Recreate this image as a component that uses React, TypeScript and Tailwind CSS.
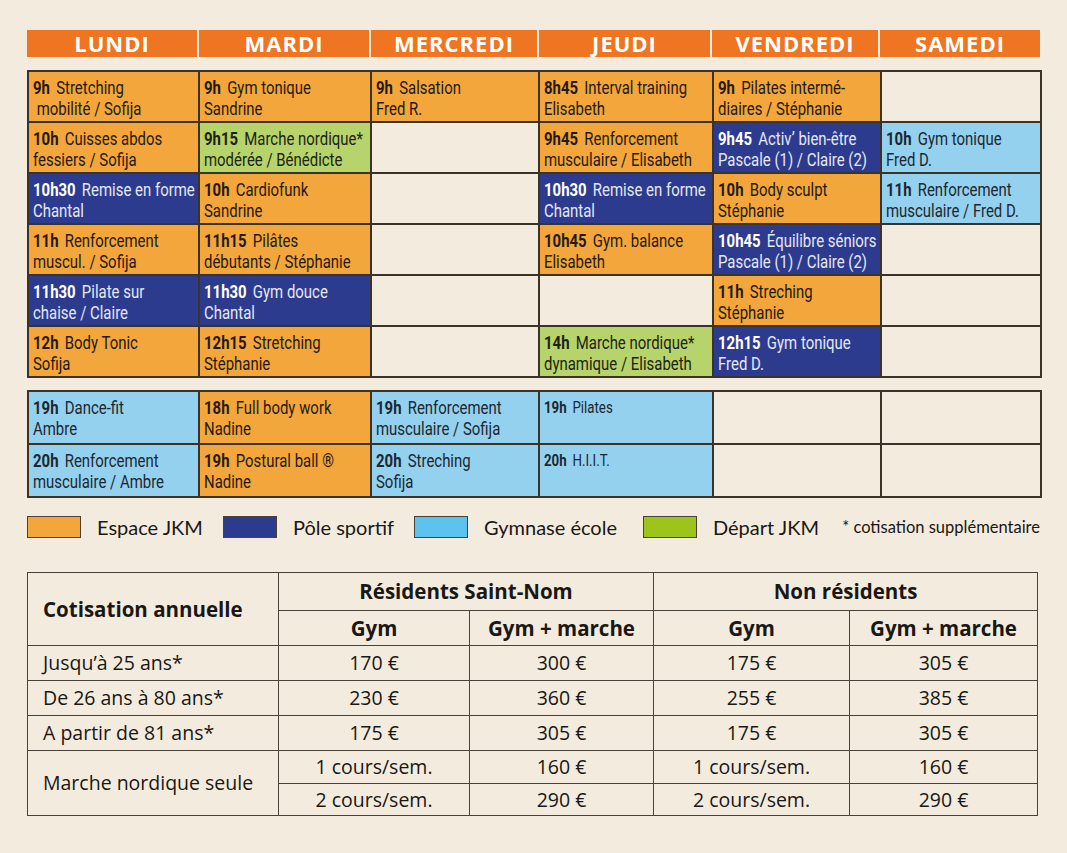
import React from 'react';

type Slot = { t: string; a: string; b?: string; c?: 'o' | 'n' | 'b' | 'g'; small?: boolean } | null;

const cellFont = { fontFamily: 'Roboto, "Liberation Sans", sans-serif' };

const days = [
  { name: 'LUNDI', w: 'w-[170px]' },
  { name: 'MARDI', w: 'w-[170px]' },
  { name: 'MERCREDI', w: 'w-[166px]' },
  { name: 'JEUDI', w: 'w-[171px]' },
  { name: 'VENDREDI', w: 'w-[166px]' },
  { name: 'SAMEDI', w: 'w-[160px]' },
];

const colWidths = ['w-[171px]', 'w-[172px]', 'w-[168px]', 'w-[174px]', 'w-[168px]', 'w-[160px]'];

const morning: Slot[][] = [
  [
    { t: '9h', a: 'Stretching', b: '\u00a0mobilité / Sofija', c: 'o' },
    { t: '9h', a: 'Gym tonique', b: 'Sandrine', c: 'o' },
    { t: '9h', a: 'Salsation', b: 'Fred R.', c: 'o' },
    { t: '8h45', a: 'Interval training', b: 'Elisabeth', c: 'o' },
    { t: '9h', a: 'Pilates intermé-', b: 'diaires / Stéphanie', c: 'o' },
    null,
  ],
  [
    { t: '10h', a: 'Cuisses abdos', b: 'fessiers / Sofija', c: 'o' },
    { t: '9h15', a: 'Marche nordique*', b: 'modérée / Bénédicte', c: 'g' },
    null,
    { t: '9h45', a: 'Renforcement', b: 'musculaire / Elisabeth', c: 'o' },
    { t: '9h45', a: 'Activ’ bien-être', b: 'Pascale (1) / Claire (2)', c: 'n' },
    { t: '10h', a: 'Gym tonique', b: 'Fred D.', c: 'b' },
  ],
  [
    { t: '10h30', a: 'Remise en forme', b: 'Chantal', c: 'n' },
    { t: '10h', a: 'Cardiofunk', b: 'Sandrine', c: 'o' },
    null,
    { t: '10h30', a: 'Remise en forme', b: 'Chantal', c: 'n' },
    { t: '10h', a: 'Body sculpt', b: 'Stéphanie', c: 'o' },
    { t: '11h', a: 'Renforcement', b: 'musculaire / Fred D.', c: 'b' },
  ],
  [
    { t: '11h', a: 'Renforcement', b: 'muscul. / Sofija', c: 'o' },
    { t: '11h15', a: 'Pilâtes', b: 'débutants / Stéphanie', c: 'o' },
    null,
    { t: '10h45', a: 'Gym. balance', b: 'Elisabeth', c: 'o' },
    { t: '10h45', a: 'Équilibre séniors', b: 'Pascale (1) / Claire (2)', c: 'n' },
    null,
  ],
  [
    { t: '11h30', a: 'Pilate sur', b: 'chaise / Claire', c: 'n' },
    { t: '11h30', a: 'Gym douce', b: 'Chantal', c: 'n' },
    null,
    null,
    { t: '11h', a: 'Streching', b: 'Stéphanie', c: 'o' },
    null,
  ],
  [
    { t: '12h', a: 'Body Tonic', b: 'Sofija', c: 'o' },
    { t: '12h15', a: 'Stretching', b: 'Stéphanie', c: 'o' },
    null,
    { t: '14h', a: 'Marche nordique*', b: 'dynamique / Elisabeth', c: 'g' },
    { t: '12h15', a: 'Gym tonique', b: 'Fred D.', c: 'n' },
    null,
  ],
];

const evening: Slot[][] = [
  [
    { t: '19h', a: 'Dance-fit', b: 'Ambre', c: 'b' },
    { t: '18h', a: 'Full body work', b: 'Nadine', c: 'o' },
    { t: '19h', a: 'Renforcement', b: 'musculaire / Sofija', c: 'b' },
    { t: '19h', a: 'Pilates', c: 'b', small: true },
    null,
    null,
  ],
  [
    { t: '20h', a: 'Renforcement', b: 'musculaire / Ambre', c: 'b' },
    { t: '19h', a: 'Postural ball ®', b: 'Nadine', c: 'o' },
    { t: '20h', a: 'Streching', b: 'Sofija', c: 'b' },
    { t: '20h', a: 'H.I.I.T.', c: 'b', small: true },
    null,
    null,
  ],
];

const bg = {
  o: 'bg-[#f2a63c] text-[#261a0e]',
  n: 'bg-[#2d3b8e] text-[#e4e8f5]',
  b: 'bg-[#93d1ee] text-[#1d2730]',
  g: 'bg-[#b7d46c] text-[#1d230f]',
};

function Cell({ s, w }: { s: Slot; w: string }) {
  if (!s) return <td className={`${w} border-2 border-[#3a3328] bg-[#f3ecde]`} />;
  return (
    <td className={`${w} border-2 border-[#3a3328] ${bg[s.c ?? 'o']} align-top pl-[4px] pt-[5px] overflow-hidden`} style={cellFont}>
      <div className="origin-top-left scale-x-[0.83] whitespace-nowrap">
        <div className={s.small ? 'text-[16px] leading-[21px]' : 'text-[18px] leading-[21px]'}>
          <span className={`font-bold mr-[3px] ${s.c === 'n' ? 'text-white' : ''}`}>{s.t}</span> {s.a}
        </div>
        {s.b && <div className="text-[18px] leading-[21px]">{s.b}</div>}
      </div>
    </td>
  );
}

function Schedule({ rows, h }: { rows: Slot[][]; h: string }) {
  return (
    <table className="w-[1013px] table-fixed border-collapse">
      <tbody>
        {rows.map((r, i) => (
          <tr key={i} className={h}>
            {r.map((s, j) => (
              <Cell key={j} s={s} w={colWidths[j]} />
            ))}
          </tr>
        ))}
      </tbody>
    </table>
  );
}

const legend = [
  { c: 'bg-[#f2a63c]', l: 'Espace JKM' },
  { c: 'bg-[#2d3b8e]', l: 'Pôle sportif' },
  { c: 'bg-[#5ec2ee]', l: 'Gymnase école' },
  { c: 'bg-[#9dc41b]', l: 'Départ JKM' },
];

const prices = [
  ['Jusqu’à 25 ans*', '170 €', '300 €', '175 €', '305 €'],
  ['De 26 ans à 80 ans*', '230 €', '360 €', '255 €', '385 €'],
  ['A partir de 81 ans*', '175 €', '305 €', '175 €', '305 €'],
];

export default function App() {
  const td = 'border-[1.5px] border-[#4a4138] text-center align-middle';
  const th = `${td} font-bold text-[20.5px]`;
  return (
    <div className="min-h-[853px] w-[1067px] bg-[#f3ecde] pt-[30px] pl-[27px] text-[#1a1714]">
      {/* Day headers */}
      <div className="flex gap-[2px]" style={{ fontFamily: '"Open Sans", sans-serif' }}>
        {days.map((d) => (
          <div key={d.name} className={`${d.w} h-[27px] bg-[#ef7522] text-white font-bold text-[22px] leading-[27px] text-center tracking-[1px]`}>
            {d.name}
          </div>
        ))}
      </div>

      <div className="mt-[13px]">
        <Schedule rows={morning} h="h-[51px]" />
      </div>
      <div className="mt-[12px]">
        <Schedule rows={evening} h="h-[53px]" />
      </div>

      {/* Legend */}
      <div className="mt-[17px] flex items-center h-[24px] w-[1013px]" style={{ fontFamily: 'Lato, sans-serif' }}>
        {legend.map((l, i) => (
          <div key={l.l} className={`flex items-center ${i === 0 ? '' : i === 3 ? 'ml-[26px]' : 'ml-[20px]'}`}>
            <span className={`w-[54px] h-[22px] ${l.c} border-[1.5px] border-[#4a4138]`} />
            <span className="ml-[16px] text-[20px] leading-[24px]">{l.l}</span>
          </div>
        ))}
        <span className="ml-auto text-[16.5px] leading-[24px]">* cotisation supplémentaire</span>
      </div>

      {/* Prices */}
      <table className="mt-[33px] w-[1010px] table-fixed border-collapse text-[19.5px]" style={{ fontFamily: '"Open Sans", sans-serif' }}>
        <colgroup>
          <col className="w-[251px]" />
          <col className="w-[191px]" />
          <col className="w-[184px]" />
          <col className="w-[196px]" />
          <col className="w-[188px]" />
        </colgroup>
        <tbody>
          <tr className="h-[38px]">
            <td rowSpan={2} className={`${th} text-left pl-[15px]`}>Cotisation annuelle</td>
            <td colSpan={2} className={th}>Résidents Saint-Nom</td>
            <td colSpan={2} className={th}>Non résidents</td>
          </tr>
          <tr className="h-[35px]">
            <td className={th}>Gym</td>
            <td className={th}>Gym + marche</td>
            <td className={th}>Gym</td>
            <td className={th}>Gym + marche</td>
          </tr>
          {prices.map((r) => (
            <tr key={r[0]} className="h-[35px]">
              <td className={`${td} text-left pl-[15px]`}>{r[0]}</td>
              {r.slice(1).map((v, i) => (
                <td key={i} className={td}>{v}</td>
              ))}
            </tr>
          ))}
          <tr className="h-[33px]">
            <td rowSpan={2} className={`${td} text-left pl-[15px]`}>Marche nordique seule</td>
            <td className={td}>1 cours/sem.</td>
            <td className={td}>160 €</td>
            <td className={td}>1 cours/sem.</td>
            <td className={td}>160 €</td>
          </tr>
          <tr className="h-[32px]">
            <td className={td}>2 cours/sem.</td>
            <td className={td}>290 €</td>
            <td className={td}>2 cours/sem.</td>
            <td className={td}>290 €</td>
          </tr>
        </tbody>
      </table>
    </div>
  );
}
